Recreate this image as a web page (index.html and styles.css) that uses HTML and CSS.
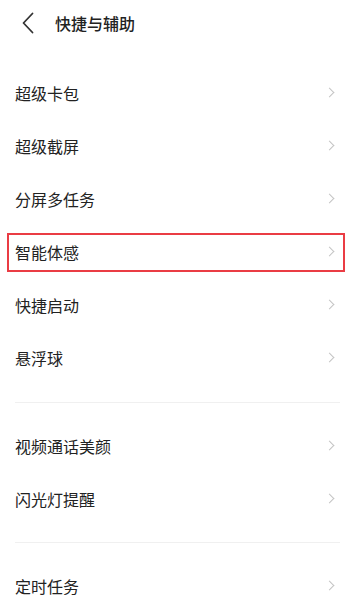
FILE: index.html
```html
<!DOCTYPE html>
<html lang="zh-CN">
<head>
    <meta charset="UTF-8">
    <meta name="viewport" content="width=device-width, initial-scale=1.0">
    <title>快捷与辅助</title>
    <link rel="stylesheet" href="styles.css">
</head>
<body>
    <div class="page">
        <header class="top-bar">
            <svg class="back-icon" width="12" height="22" viewBox="0 0 12 22">
                <path d="M10.5 1.5 L1.5 11 L10.5 20.5" fill="none" stroke="#333" stroke-width="1.8" stroke-linecap="round" stroke-linejoin="round"/>
            </svg>
            <h1>快捷与辅助</h1>
        </header>

        <section class="group">
            <div class="row"><span>超级卡包</span><i class="chevron"></i></div>
            <div class="row"><span>超级截屏</span><i class="chevron"></i></div>
            <div class="row"><span>分屏多任务</span><i class="chevron"></i></div>
            <div class="row highlight"><span>智能体感</span><i class="chevron"></i></div>
            <div class="row"><span>快捷启动</span><i class="chevron"></i></div>
            <div class="row"><span>悬浮球</span><i class="chevron"></i></div>
        </section>

        <section class="group">
            <div class="row"><span>视频通话美颜</span><i class="chevron"></i></div>
            <div class="row"><span>闪光灯提醒</span><i class="chevron"></i></div>
        </section>

        <section class="group">
            <div class="row"><span>定时任务</span><i class="chevron"></i></div>
        </section>
    </div>
</body>
</html>
```

FILE: styles.css
```css
:root {
    --text-color: #222;
    --chevron-color: #c4c4c4;
    --divider-color: #f0f0f0;
    --mark-color: #ea3c44;
    --font-family: "Noto Sans CJK SC", "Noto Sans", sans-serif;
}

* {
    box-sizing: border-box;
    margin: 0;
    padding: 0;
    font-family: var(--font-family);
}

body {
    background: #fff;
    color: var(--text-color);
    overflow: hidden;
}

.page {
    width: 355px;
}

.top-bar {
    height: 47px;
    display: flex;
    align-items: center;
    padding-left: 22px;
    padding-bottom: 1px;
}

.back-icon {
    display: block;
    margin-right: 21px;
}

h1 {
    font-size: 16px;
    font-weight: 500;
    line-height: 1;
}

.group {
    margin: 0 15px;
    padding: 19px 0 18px;
    border-bottom: 1px solid var(--divider-color);
}

.group + .group {
    padding-top: 16px;
    padding-bottom: 17px;
}

.group:last-child {
    border-bottom: none;
}

.row {
    position: relative;
    height: 53px;
    display: flex;
    align-items: center;
    justify-content: space-between;
    font-size: 16px;
}

.chevron {
    width: 7px;
    height: 7px;
    border-top: 1.3px solid var(--chevron-color);
    border-right: 1.3px solid var(--chevron-color);
    transform: rotate(45deg);
    margin-right: 7px;
}

.highlight::after {
    content: "";
    position: absolute;
    left: -8px;
    right: -5px;
    top: 8px;
    bottom: 6px;
    border: 2px solid var(--mark-color);
}
```
